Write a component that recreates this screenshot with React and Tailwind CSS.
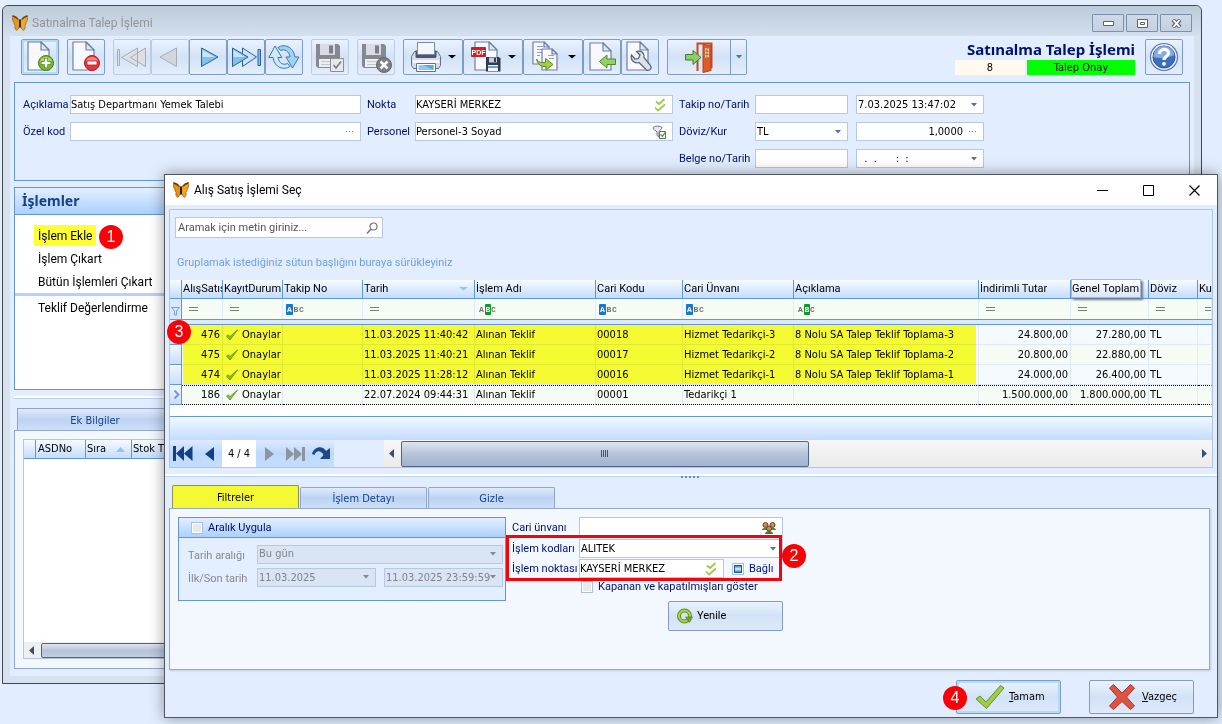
import { useState } from "react";

const pageFill = "#f7f9ff";

function Butterfly({ faded }) {
  return (
    <svg width="16" height="16" viewBox="0 0 16 16" opacity={faded ? 0.9 : 1}>
      <path d="M7.500 5.500C6 2.500 3 .8.4.6c-.2 2.400 0 5.400 1.400 6.600 0 1.500.6 2.600 1.400 3.100-.8 1.700-.2 4 1.300 5.100C6 14.800 7.200 12.500 7.600 10z" fill="#e8920f" stroke="#8a4a08" strokeWidth=".7" />
      <path d="M8.500 5.500C10 2.500 13 .8 15.600.6c.2 2.400 0 5.400-1.400 6.600 0 1.500-.6 2.600-1.400 3.100.8 1.700.2 4-1.300 5.100-1.500-.6-2.700-2.900-3.100-5.400z" fill="#f2a422" stroke="#8a4a08" strokeWidth=".7" />
      <path d="M.8 1.200C3.500 1.800 5 3 6 4.500M15.200 1.200C12.500 1.800 11 3 10 4.500" fill="none" stroke="#5b3008" strokeWidth="1.200" />
      <path d="M8 4.500v8" stroke="#2b1a0c" strokeWidth="2" />
    </svg>
  );
}

function Page({ x = 3, y = 1, w = 22, h = 28 }) {
  const f = w > 18 ? 8 : 5;
  return (
    <g stroke="#6d7fa8" strokeWidth="1.200" strokeLinejoin="round">
      <path d={`M${x} ${y}h${w - f}l${f} ${f}v${h - f}h${-w}z`} fill={pageFill} />
      <path d={`M${x + w - f} ${y}v${f}h${f}z`} fill="#dfe6f6" />
    </g>
  );
}

function Icon({ children, size = 32 }) {
  return (
    <svg width={size} height={size} viewBox={`0 0 ${size} ${size}`} className="shrink-0" fill="none">
      {children}
    </svg>
  );
}

function NewIcon() {
  return (
    <Icon>
      <Page x={4} y={1} w={21} />
      <circle cx="22" cy="22" r="7.500" fill="#76b82a" stroke="#4c7c17" />
      <path d="M16 20a6.500 6.500 0 0 1 12 0c-4 2-8 2-12 0z" fill="#a9d95f" />
      <path d="M22 17v10M17 22h10" stroke="#4c7c17" strokeWidth="4" />
      <path d="M22 17.500v9M17.500 22h9" stroke="#fff" strokeWidth="2.600" />
    </Icon>
  );
}

function DeleteIcon() {
  return (
    <Icon>
      <Page x={3} y={1} w={21} />
      <circle cx="22" cy="22" r="7.500" fill="#ee3236" stroke="#b31a1f" />
      <path d="M16 20a6.500 6.500 0 0 1 12 0z" fill="#f98282" />
      <path d="M17 20h10v4H17z" fill="#fff" stroke="#b31a1f" strokeWidth=".8" />
    </Icon>
  );
}

function FirstIcon() {
  return (
    <Icon>
      <g fill="#dcdfe4" stroke="#a7adb7">
        <path d="M1.500 8.500h2v16h-2zM5.500 16.500l16-9.500v18.500zM14.500 16.500L29.500 7v18.500z" />
      </g>
    </Icon>
  );
}

function PrevIcon() {
  return (
    <Icon>
      <path d="M6 16L22.500 7v18.500z" fill="#d3d7dd" stroke="#a7adb7" />
    </Icon>
  );
}

function NextIcon() {
  return (
    <Icon>
      <path d="M9.500 7L26 16 9.500 25.500z" fill="#7fc0ec" stroke="#2d5f9e" />
      <path d="M10.500 9L23 16H10.500z" fill="#c8e5f8" />
    </Icon>
  );
}

function LastIcon() {
  return (
    <Icon>
      <g stroke="#2d5f9e">
        <path d="M12.500 7L26.500 16l-14 9.500z" fill="#c8e5f8" />
        <path d="M2.500 7L18 16 2.500 25.500z" fill="#7fc0ec" />
        <path d="M28 8.500h2.500v16H28z" fill="#7fc0ec" />
      </g>
      <path d="M3.500 9L15 16H3.500z" fill="#c8e5f8" />
    </Icon>
  );
}

function RefreshIcon() {
  return (
    <Icon>
      <g stroke="#3c78b0" strokeLinejoin="round">
        <path d="M10 6.500c6-4 15-1.500 17 9.500h4l-6.500 11L18 16h4c-1-6-5.500-8.500-9.500-6.500z" fill="#9fd3ee" />
        <path d="M22 25.500c-6 4-15.500 1.500-17-9H.8L7 5l6.800 11.500H10c1 6 5.500 8 9.500 6z" fill="#cdeaf6" />
      </g>
    </Icon>
  );
}

function Floppy() {
  return (
    <g>
      <path d="M2 3h22l2 2v22H4l-2-2z" fill="#85898f" />
      <path d="M6 3h15v11H6z" fill="#d9dde3" />
      <path d="M15 4.500h4v8h-4z" fill="#7b7f85" />
      <path d="M5 18h17v8H5z" fill="#eceef2" />
      <path d="M7 20.500h13M7 23.500h13" stroke="#c3c7ce" />
    </g>
  );
}

function SaveIcon() {
  return (
    <Icon>
      <Floppy />
      <path d="M16.500 17.500h13v13h-13z" fill="#e6e8ec" stroke="#8b9097" />
      <path d="M19.500 24l2.500 3 5-6.500" stroke="#7a7f86" strokeWidth="1.600" />
    </Icon>
  );
}

function SaveCloseIcon() {
  return (
    <Icon>
      <Floppy />
      <circle cx="24" cy="24" r="7.500" fill="#7b7f85" stroke="#64686e" />
      <path d="M20.500 20.500l7 7m0-7l-7 7" stroke="#fff" strokeWidth="2.600" />
    </Icon>
  );
}

function PrinterIcon() {
  return (
    <Icon>
      <path d="M4.500 10.500h23l3 5v9l-2 3h-25l-2-3v-9z" fill="#d5dbe8" stroke="#5f7093" />
      <path d="M5.500 9.500h21v6c0 1-1 1.500-2 1.500h-17c-1 0-2-.5-2-1.500z" fill="#4d566c" />
      <path d="M7.500 1.500h17v12h-17z" fill="#f4f6fc" stroke="#7a89ab" />
      <path d="M3 19h26v3H3z" fill="#f4f6fb" />
      <path d="M6.500 22.500h19v8h-19z" fill="#fff" stroke="#5f7093" />
      <path d="M8.500 24h15v5h-15z" fill="#8ccaf2" />
      <path d="M13 24h10.500v5z" fill="#5aa9e4" />
    </Icon>
  );
}

function PdfIcon() {
  return (
    <Icon>
      <Page x={5} y={1} w={22} h={28} />
      <rect x="1" y="6" width="15" height="10" rx="1" fill="#cf1f24" />
      <text x="8.500" y="13.500" textAnchor="middle" fontSize="7" fontWeight="bold" fill="#fff" fontFamily="Liberation Sans, sans-serif">PDF</text>
      <path d="M16 16h13l1.500 1.500v13H16z" fill="#33394f" />
      <path d="M19 16.500h8v5h-8z" fill="#c8cede" />
      <path d="M24 17h2v4h-2z" fill="#33394f" />
      <path d="M18 24h10v6H18z" fill="#f3f5fb" />
      <path d="M18 25h10v2H18z" fill="#5aa5dc" />
    </Icon>
  );
}

function CopyIcon() {
  return (
    <Icon>
      <Page x={3} y={1} w={16} h={22} />
      <path d="M7 5.500h6M7 8.500h6M7 11.500h8M7 14.500h3" stroke="#90a0c4" />
      <Page x={12} y={8} w={15} h={21} />
      <path d="M18 14.500h6M19 17.500h5" stroke="#90a0c4" />
      <path d="M6.500 18c2 3.500 5 4 9 3.500V17.500l7.500 6-7 5.500v-3.500C10.500 26 7.500 23 6.500 18z" fill="#a5cf3c" stroke="#5f8a1c" />
    </Icon>
  );
}

function ImportIcon() {
  return (
    <Icon>
      <Page x={4} y={2} w={21} h={27} />
      <path d="M13.500 20.500l7.500-6.500v4h8.500v5.500H21V27z" fill="#97cf62" stroke="#4f8a2a" />
    </Icon>
  );
}

function WrenchIcon() {
  return (
    <Icon>
      <Page x={3} y={1} w={21} h={28} />
      <path d="M7.500 14l3.500 4 3.500-.5L16 14l-3.500-3.500c4-1.500 8 1 7.500 6l6.500 8c2 3-1.500 6-4 4.500L15 21.500C10 23 6 18.500 7.500 14z" fill="#dbe2ec" stroke="#566277" strokeWidth="1.200" />
    </Icon>
  );
}

function DoorIcon() {
  return (
    <Icon>
      <path d="M14.500 30V2.500h14V27" stroke="#d0451c" strokeWidth="2" />
      <path d="M20 3.500l8 1v25l-8 2z" fill="#d95b2e" stroke="#b5431a" />
      <path d="M22 7l4 .5v8.500l-4 .5z" fill="#f6e3c0" />
      <path d="M24 7v9M22 10l4 .3M22 13.300l4-.1" stroke="#a8421c" strokeWidth=".8" />
      <path d="M2.500 13.500H10v-4l8 7-8 7v-4.500H2.500z" fill="#8ccf6a" stroke="#3f7d2c" />
    </Icon>
  );
}

function HelpIcon() {
  return (
    <Icon>
      <circle cx="16" cy="16" r="13.500" fill="#e9effb" stroke="#5a76ab" strokeWidth="1.200" />
      <circle cx="16" cy="16" r="11" fill="#3f6fbc" stroke="#274f93" />
      <path d="M5.500 14a10.600 10.600 0 0 1 21 0c-6 3-15 4-21 2z" fill="#86aae2" />
      <path d="M11.500 13c0-6 9-6 9-1 0 3.500-4.500 3.500-4.500 7" stroke="#fff" strokeWidth="3.200" />
      <circle cx="16" cy="22.800" r="1.900" fill="#fff" />
    </Icon>
  );
}

function Caret({ color = "#4a74ad", size = 6 }) {
  return (
    <svg width={size} height="4" viewBox="0 0 6 4" preserveAspectRatio="none" className="shrink-0 pointer-events-none">
      <path d="M0 0h6L3 3.500z" fill={color} />
    </svg>
  );
}

function DoubleCheck() {
  return (
    <Icon size={14}>
      <path d="M4 3.500l3 2.500 5.500-5M3 9.500l3 3 7-6" stroke="#9cc94b" strokeWidth="1.700" />
    </Icon>
  );
}

function PersonFilter() {
  return (
    <Icon size={14}>
      <path d="M1 3c0-2.500 9-2.500 9 0 0 1-3 2.500-3 4v5L5 10.500V7C4 5.500 1 4.500 1 3z" fill="#e8ebf0" stroke="#6b7484" />
      <path d="M7.500 6.500h6v7h-6z" fill="#fff" stroke="#5a6b86" />
      <path d="M8.500 9.500l2 2 2.500-4" stroke="#4f9a1c" strokeWidth="1.400" />
    </Icon>
  );
}

function PeopleIcon() {
  return (
    <Icon size={14}>
      <path d="M0 9c0-3 7-3 7 0zM7 9c0-3 7-3 7 0z" fill="#4c8a3a" />
      <path d="M3 13c0-4 8-4 8 0z" fill="#3d7a2c" />
      <g fill="#c98d5a" stroke="#5f3512" strokeWidth=".9">
        <circle cx="3.500" cy="4" r="2.500" />
        <circle cx="10.500" cy="4" r="2.500" />
        <circle cx="7" cy="7.500" r="2.500" />
      </g>
    </Icon>
  );
}

function SmallTick() {
  return (
    <Icon size={14}>
      <path d="M1.500 8L5 12 12.500 2 5 8.500 3 6.800z" fill="#8fc04c" stroke="#6a9a30" strokeWidth=".9" strokeLinejoin="round" />
    </Icon>
  );
}

function Dots() {
  return (
    <svg width="8" height="2" viewBox="0 0 8 2" className="shrink-0">
      <path d="M0 0h1v1H0zM3 0h1v1H3zM6 0h1v1H6z" fill="#5a7fb5" />
    </svg>
  );
}

function ToolButton({ children, disabled, active, wide, label }) {
  return (
    <button
      aria-label={label}
      disabled={disabled}
      className={`flex h-9 items-center rounded-xs border bg-linear-to-b from-[#eaf3ff] via-[#d2e2f6] to-[#e4eefc] ${
        wide ? "w-[60px] justify-between px-1.5" : "w-[38px] justify-center"
      } ${disabled ? "border-[#bccbe0]" : "border-[#7f9bc6]"} ${active ? "ring-2 ring-inset ring-[#b4dbf8]" : ""}`}
    >
      {children}
      {wide && <Caret color="#000" size={8} />}
    </button>
  );
}

function Field({ id, label, value, type = "text", align, disabled, icon, className = "" }) {
  return (
    <div
      className={`flex h-[19px] min-w-0 items-center border pr-1.5 font-['DejaVu_Sans_Condensed','DejaVu_Sans',sans-serif] ${
        disabled ? "border-[#b5c8e4] bg-[#d9e4f4] text-[#808488]" : "border-[#b5c8e4] bg-white text-black"
      } ${className}`}
    >
      {type === "select" ? (
        <select id={id} aria-label={label} disabled={disabled} defaultValue={value} className="h-full min-w-0 flex-1 appearance-none bg-transparent pl-px outline-none">
          <option>{value}</option>
        </select>
      ) : (
        <input
          id={id}
          aria-label={label}
          disabled={disabled}
          defaultValue={value}
          className={`h-full min-w-0 flex-1 whitespace-pre bg-transparent outline-none ${align === "right" ? "pr-1.5 text-right" : ""}`}
        />
      )}
      {icon}
    </div>
  );
}

function Badge({ n, className }) {
  return (
    <span className={`absolute z-10 flex size-6 items-center justify-center rounded-full bg-[#fb0007] font-['Liberation_Sans',sans-serif] text-base leading-none text-white ${className}`}>
      {n}
    </span>
  );
}

function Splitter({ grip }) {
  return (
    <div className="relative h-[3px] border-t-2 border-b border-t-white border-b-[#b8d4f8]">
      {grip && (
        <svg width="20" height="3" viewBox="0 0 20 3" className="absolute top-0 left-1/2 -translate-x-1/2">
          <path d="M0 0h2v2H0zM4 0h2v2H4zM8 0h2v2H8zM12 0h2v2h-2zM16 0h2v2h-2z" fill="#5f8ecb" />
        </svg>
      )}
    </div>
  );
}

function ArrowHead({ right }) {
  return (
    <svg width="5" height="9" viewBox="0 0 5 9">
      <path d={right ? "M0 0v9l5-4.500z" : "M5 0v9L0 4.500z"} fill="#3b4e78" />
    </svg>
  );
}

function Equals() {
  return (
    <svg width="9" height="5" viewBox="0 0 9 5" className="ml-[7px]">
      <path d="M0 0h9v1H0zM0 3h9v1H0z" fill="#7b7f7b" />
    </svg>
  );
}

function AbcFilter({ mode }) {
  const on = mode === "begins" ? "bg-[#1277d6] text-white" : "";
  const mid = mode === "contains" ? "bg-[#0c9b28] text-white" : "";
  return (
    <span className="ml-[3px] flex items-center font-['Liberation_Mono',monospace] text-[8px] leading-[11px] font-bold text-[#707070]">
      <span className={`w-[7px] shrink-0 rounded-[1px] text-center leading-[11px] ${on}`}>A</span>
      <span className={`w-[6px] shrink-0 rounded-[1px] text-center leading-[11px] ${mid}`}>B</span>
      <span>C</span>
    </span>
  );
}

const columns = [
  { title: "AlışSatış", width: "w-[41px]", filter: "eq" },
  { title: "KayıtDurum", width: "w-[60px]", filter: "eq" },
  { title: "Takip No", width: "w-[80px]", filter: "begins" },
  { title: "Tarih", width: "w-[112px]", filter: "eq", sort: true },
  { title: "İşlem Adı", width: "w-[121px]", filter: "contains" },
  { title: "Cari Kodu", width: "w-[87px]", filter: "begins" },
  { title: "Cari Ünvanı", width: "w-[111px]", filter: "begins" },
  { title: "Açıklama", width: "w-[185px]", filter: "contains" },
  { title: "İndirimli Tutar", width: "w-[92px]", filter: "eq" },
  { title: "Genel Toplam", width: "w-[78px]", filter: "eq", raised: true },
  { title: "Döviz", width: "w-[49px]", filter: "eq" },
  { title: "Ku", width: "", filter: "eq" },
];

const rows = [
  ["476", "Onaylar", "", "11.03.2025 11:40:42", "Alınan Teklif", "00018", "Hizmet Tedarikçi-3", "8 Nolu SA Talep Teklif Toplama-3", "24.800,00", "27.280,00", "TL", ""],
  ["475", "Onaylar", "", "11.03.2025 11:40:21", "Alınan Teklif", "00017", "Hizmet Tedarikçi-2", "8 Nolu SA Talep Teklif Toplama-2", "20.800,00", "22.880,00", "TL", ""],
  ["474", "Onaylar", "", "11.03.2025 11:28:12", "Alınan Teklif", "00016", "Hizmet Tedarikçi-1", "8 Nolu SA Talep Teklif Toplama-1", "24.000,00", "26.400,00", "TL", ""],
  ["186", "Onaylar", "", "22.07.2024 09:44:31", "Alınan Teklif", "00001", "Tedarikçi 1", "", "1.500.000,00", "1.800.000,00", "TL", ""],
];

const headFill = "bg-linear-to-b from-[#f7fbff] to-[#c3dcff]";

function OrdersTable() {
  const [selected, setSelected] = useState("186");

  return (
    <div className="relative bg-white pb-[11px]">
      <table className="w-full table-fixed border-separate border-spacing-0 whitespace-nowrap">
        <colgroup>
          <col className="w-[12px]" />
          {columns.map((c) => (
            <col key={c.title} className={c.width} />
          ))}
        </colgroup>
        <thead>
          <tr className="h-[19px] font-['Roboto',sans-serif]">
            <th className={`border-r border-b border-[#6496d2] p-0 ${headFill}`}></th>
            {columns.map((c) => (
              <th key={c.title} className={`relative border-r border-b border-[#6496d2] p-0 text-left font-normal last:border-r-0 ${headFill}`}>
                {c.raised ? (
                  <span className="absolute -top-px left-0 flex h-[19px] w-[70px] items-center border border-[#a9b8cf] bg-linear-to-b from-white to-[#d7e6fb] shadow-[2px_2px_2px_#6b7a90]">
                    {c.title}
                  </span>
                ) : (
                  <div className="flex items-center justify-between overflow-hidden pl-px">
                    <span className="overflow-hidden">{c.title}</span>
                    {c.sort && (
                      <span className="pr-1.5">
                        <Caret color="#93c3fb" size={9} />
                      </span>
                    )}
                  </div>
                )}
              </th>
            ))}
          </tr>
          <tr className="h-5">
            <td className="border-r border-[#6496d2] bg-[#d9e8fc] p-0">
              <svg width="9" height="10" viewBox="0 0 9 10" className="ml-px mt-1" fill="none">
                <path d="M.5 1.500h8L5.500 5v4h-2V5z" stroke="#6ba3e8" />
              </svg>
            </td>
            {columns.map((c) => (
              <td key={c.title} className="overflow-hidden border-r border-[#dfe9fb] bg-[#f4fcf4] p-0">
                {c.filter === "eq" ? <Equals /> : <AbcFilter mode={c.filter} />}
              </td>
            ))}
          </tr>
          <tr className="h-[6px]">
            <td colSpan={13} className="border-y border-[#6496d2] bg-[#dbe9fc] p-0"></td>
          </tr>
        </thead>
        <tbody>
          {rows.map((row, r) => {
            const isSelected = row[0] === selected;
            return (
              <tr key={row[0]} className={`h-5 ${r % 2 ? "bg-[#f4fcf4]" : "bg-[#f5faff]"}`} onClick={() => setSelected(row[0])}>
                <td className="border-r border-b border-[#6496d2] bg-linear-to-b from-[#f2f7ff] to-[#c9defb] p-0">
                  {isSelected && (
                    <svg width="7" height="9" viewBox="0 0 7 9" className="ml-[3px]" fill="none">
                      <path d="M1.500 .5l4 4-4 4" stroke="#6496dc" strokeWidth="1.800" />
                    </svg>
                  )}
                </td>
                {row.map((cell, i) => (
                  <td
                    key={i}
                    className={`border-r border-r-[#dfe9fb] p-0 ${i === 0 || i === 8 || i === 9 ? "pr-0.5 text-right" : "pl-px"} ${
                      isSelected ? "border-y border-y-black [border-block-style:dotted]" : "border-b border-b-[#dfe9fb]"
                    }`}
                  >
                    {i === 1 ? (
                      <span className="flex items-center gap-[3px] pl-px">
                        <SmallTick />
                        {cell}
                      </span>
                    ) : (
                      cell
                    )}
                  </td>
                ))}
              </tr>
            );
          })}
        </tbody>
      </table>
      {/* marker stroke over the offers being compared */}
      <div className="pointer-events-none absolute top-[45px] left-[13px] h-[59px] w-[793px] bg-[#ffff33] mix-blend-multiply"></div>
      <Badge n={3} className="top-10 -left-[3px]" />
    </div>
  );
}

function Navigator() {
  return (
    <div className="flex h-[27px] items-center">
      <div className="flex h-full items-center bg-linear-to-b from-[#deebfe] via-[#bcd8fd] to-[#c6defe]">
        <button aria-label="İlk" className="flex w-[26px] justify-center">
          <svg width="20" height="15" viewBox="0 0 20 15" fill="#123f86"><path d="M0 0h3v15H0zM11 0v15L3 7.500zM19.500 0v15L11 7.500z" /></svg>
        </button>
        <button aria-label="Önceki" className="flex w-[26px] justify-center">
          <svg width="9" height="14" viewBox="0 0 9 14" fill="#123f86"><path d="M9 0v14L0 7z" /></svg>
        </button>
        <span className="flex h-full w-[34px] items-center justify-center bg-white">4 / 4</span>
        <button aria-label="Sonraki" className="flex w-[26px] justify-center">
          <svg width="9" height="14" viewBox="0 0 9 14" fill="#8f959e"><path d="M0 0v14l9-7z" /></svg>
        </button>
        <button aria-label="Son" className="flex w-[26px] justify-center">
          <svg width="19" height="14" viewBox="0 0 19 14" fill="#8f959e"><path d="M0 0v14l8-7zM8 0v14l8-7zM16 0h3v14h-3z" /></svg>
        </button>
        <button aria-label="Git" className="flex w-[26px] justify-center">
          <svg width="18" height="13" viewBox="0 0 18 13"><path d="M0 7C2-1 11-2 14 4l4-3v11H8l3.500-4C9 3 4 3 2.500 8z" fill="#1d4a86" /></svg>
        </button>
      </div>
      <div className="ml-[50px] flex h-full flex-1 items-center bg-linear-to-b from-[#f7f7f7] to-[#ebebeb] pl-[5px]">
        <ArrowHead />
        <div className="ml-[7px] flex h-[26px] w-[408px] items-center justify-center gap-px rounded-xs border border-[#4f648c] bg-linear-to-b from-[#dfe5ef] via-[#b6c3d8] to-[#a3b3cd]">
          <svg width="8" height="7" viewBox="0 0 8 7"><path d="M0 0h1v7H0zM2 0h1v7H2zM4 0h1v7H4zM6 0h1v7H6z" fill="#435375" /></svg>
        </div>
        <div className="ml-auto pr-[5px]"><ArrowHead right /></div>
      </div>
    </div>
  );
}

function Check({ label, id, mixed, className = "" }) {
  return (
    <label htmlFor={id} className={`flex items-center gap-[5px] text-[#001070] ${className}`}>
      <span className="relative flex size-3">
        <input id={id} type="checkbox" className="size-3 appearance-none border border-[#a9c0e2] bg-[#e6e9ee] shadow-[inset_0_0_0_1px_#fff]" />
        {mixed && <span className="pointer-events-none absolute inset-[2px] border border-[#1c5a90] bg-linear-to-b from-[#2f86bd] via-[#e5f4fd] to-[#2f86bd]"></span>}
      </span>
      {label}
    </label>
  );
}

const tabFill = "bg-linear-to-b from-[#e0ebfa] via-[#bcd3f3] to-[#cfe0f8]";

function Tab({ children, active }) {
  if (active) {
    return (
      <button role="tab" aria-selected="true" className="h-[23px] w-[127px] rounded-t-xs border border-b-0 border-[#90904a] bg-[#f5f934] pt-0.5 text-black">
        {children}
      </button>
    );
  }
  return (
    <button role="tab" aria-selected="false" className={`h-[21px] w-[127px] rounded-t-xs border border-b-0 border-[#90a5cc] pt-0.5 text-[#15428b] ${tabFill}`}>
      {children}
    </button>
  );
}

function FilterPanel() {
  return (
    <div className="flex flex-1 items-start border border-[#92a8cf] bg-[#f3f8ff] pt-2 pl-2 font-['Roboto',sans-serif] shadow-[1px_1px_2px_#b9cbe8]">
      <fieldset className="h-[84px] w-[328px] border border-[#6496d2] bg-[#e3eeff]">
        <div className="flex h-5 items-center border-b border-[#6496d2] bg-linear-to-b from-[#e3efff] to-[#abd0ff] pl-3">
          <Check id="aralik" label="Aralık Uygula" />
        </div>
        <div className="flex flex-col gap-[3px] pt-1.5 pl-[9px] text-[#85898f]">
          <div className="flex items-center">
            <label htmlFor="tarihAraligi" className="w-[69px] pt-1">Tarih aralığı</label>
            <Field id="tarihAraligi" type="select" value="Bu gün" disabled icon={<Caret color="#85898f" />} className="w-[246px]" />
          </div>
          <div className="flex items-center">
            <label htmlFor="ilkTarih" className="w-[69px] pt-1">İlk/Son tarih</label>
            <Field id="ilkTarih" value="11.03.2025" disabled icon={<Caret color="#85898f" />} className="mr-2 w-[119px] pl-px" />
            <Field id="sonTarih" label="Son tarih" value="11.03.2025 23:59:59" disabled icon={<Caret color="#85898f" />} className="w-[119px] pl-px" />
          </div>
        </div>
      </fieldset>
      <div className="relative ml-[6px] w-[271px]">
        <div className="grid grid-cols-[67px_1fr] items-center gap-y-px whitespace-nowrap text-[#001070]">
          <label htmlFor="cari">Cari ünvanı</label>
          <Field id="cari" value="" icon={<PeopleIcon />} className="h-[21px] pr-0.5" />
          <label htmlFor="kodlar">İşlem kodları</label>
          <Field id="kodlar" type="select" value="ALITEK" icon={<Caret />} />
          <label htmlFor="nokta2">İşlem noktası</label>
          <div className="flex items-center gap-2">
            <Field id="nokta2" value="KAYSERİ MERKEZ" icon={<DoubleCheck />} className="w-[145px] pr-0.5" />
            <Check id="bagli" label="Bağlı" mixed />
          </div>
        </div>
        <Check id="kapanan" label="Kapanan ve kapatılmışları göster" className="ml-[69px] h-[17px]" />
        <button className="mt-1.5 ml-auto flex h-[30px] w-[115px] items-center gap-1 rounded-xs border border-[#7f9bc6] bg-linear-to-b from-[#eaf3ff] via-[#d2e2f6] to-[#dfeafa] pl-2">
          <Icon size={16}>
            <circle cx="7.500" cy="8" r="5.500" stroke="#5f8f1e" strokeWidth="4" />
            <circle cx="7.500" cy="8" r="5.500" stroke="#a6d45a" strokeWidth="2" />
            <path d="M8.500 9h7l-3 5.500z" fill="#6ea523" stroke="#4f7d15" strokeWidth=".6" />
          </Icon>
          Yenile
        </button>
        <div className="pointer-events-none absolute top-[18px] -left-[6px] h-[46px] w-[276px] border-3 border-[#f9000b]"></div>
        <Badge n={2} className="top-[27px] -right-[23px]" />
      </div>
    </div>
  );
}

function SelectDialog() {
  return (
    <section className="absolute top-[174px] right-1 bottom-1.5 left-[164px] flex flex-col border border-[#4f565f] bg-[#e2eeff] shadow-[0_0_14px_rgba(0,0,0,0.4)]">
      <header className="flex h-[30px] shrink-0 items-center bg-white pr-[17px] pl-2 font-['Roboto',sans-serif] text-xs">
        <Butterfly />
        <h2 className="ml-[5px] flex-1 text-black">Alış Satış İşlemi Seç</h2>
        <div className="flex gap-[35px]">
          <button aria-label="Küçült"><svg width="11" height="11" viewBox="0 0 11 11"><path d="M0 5h11v1H0z" /></svg></button>
          <button aria-label="Büyüt"><svg width="11" height="11" viewBox="0 0 11 11" fill="none"><path d="M.5.5h10v10H.5z" stroke="#000" /></svg></button>
          <button aria-label="Kapat"><svg width="11" height="11" viewBox="0 0 11 11" fill="none"><path d="M.5.5l10 10m0-10l-10 10" stroke="#000" strokeWidth="1.200" /></svg></button>
        </div>
      </header>

      <div className="mt-1 mr-1 ml-1 border border-[#b0c6e4]">
        <div className="px-[5px] pt-[7px]">
          <div className="flex h-[21px] w-[208px] items-center border border-[#b5c8e4] bg-white pr-1 font-['Roboto',sans-serif]">
            <input type="search" aria-label="Ara" placeholder="Aramak için metin giriniz..." className="min-w-0 flex-1 bg-transparent pl-0.5 outline-none placeholder:text-[#555555]" />
            <Icon size={12}>
              <circle cx="7.500" cy="4.500" r="3.500" stroke="#777" strokeWidth="1.200" />
              <path d="M5 7L1 11.500" stroke="#777" strokeWidth="1.500" />
            </Icon>
          </div>
        </div>
        <p className="flex h-[42px] items-center pt-2 pl-[7px] font-['Roboto',sans-serif] text-[#6f9fe0]">Gruplamak istediğiniz sütun başlığını buraya sürükleyiniz</p>
        <OrdersTable />
        <div className="h-6 border-t border-[#6496d2] bg-linear-to-b from-[#f2f8ff] to-[#c3dcff]"></div>
        <Navigator />
      </div>

      <div className="pt-1.5 pb-2">
        <Splitter grip />
      </div>

      <div className="mr-[7px] ml-1 flex flex-1 flex-col">
        <div role="tablist" className="flex items-end gap-px pl-[3px]">
          <Tab active>Filtreler</Tab>
          <Tab>İşlem Detayı</Tab>
          <Tab>Gizle</Tab>
        </div>
        <FilterPanel />
      </div>

      <footer className="flex justify-end gap-7 pt-2.5 pr-[23px] pb-[3px]">
        <div className="relative">
          <button className="flex h-[34px] w-[105px] items-center gap-1 rounded-xs border border-[#7f9bc6] bg-linear-to-b from-[#eaf3ff] via-[#d2e2f6] to-[#dfeafa] pl-[18px] ring-2 ring-[#b4dbf8] ring-inset">
            <Icon size={30}>
              <path d="M1 17l4-3 6 6L25.500 3.500 29 6 11.500 26.500z" fill="#a2cb47" stroke="#66912a" strokeLinejoin="round" />
            </Icon>
            <span><u>T</u>amam</span>
          </button>
          <Badge n={4} className="top-1.5 -left-[13px]" />
        </div>
        <button className="flex h-[34px] w-[105px] items-center gap-1.5 rounded-xs border border-[#7f9bc6] bg-linear-to-b from-[#eaf3ff] via-[#d2e2f6] to-[#dfeafa] pl-[18px]">
          <Icon size={28}>
            <path d="M1.500 5L5.500 1.500 14 10 22.500 1.500 26.500 5 18.500 14 26.500 23 22.500 26.500 14 18.500 5.500 26.500 1.500 23 9.500 14z" fill="#dd5443" stroke="#a5352a" strokeLinejoin="round" />
          </Icon>
          <span><u>V</u>azgeç</span>
        </button>
      </footer>
    </section>
  );
}

function Toolbar() {
  return (
    <div className="flex gap-2">
      <ToolButton label="Yeni" active><NewIcon /></ToolButton>
      <ToolButton label="Sil"><DeleteIcon /></ToolButton>
      <div className="flex">
        <ToolButton label="İlk kayıt" disabled><FirstIcon /></ToolButton>
        <ToolButton label="Önceki kayıt" disabled><PrevIcon /></ToolButton>
        <ToolButton label="Sonraki kayıt"><NextIcon /></ToolButton>
        <ToolButton label="Son kayıt"><LastIcon /></ToolButton>
        <ToolButton label="Tazele"><RefreshIcon /></ToolButton>
      </div>
      <ToolButton label="Kaydet" disabled><SaveIcon /></ToolButton>
      <ToolButton label="Kaydet ve kapat" disabled><SaveCloseIcon /></ToolButton>
      <div className="flex">
        <ToolButton label="Yazdır" wide><PrinterIcon /></ToolButton>
        <ToolButton label="PDF" wide><PdfIcon /></ToolButton>
        <ToolButton label="Kopyala" wide><CopyIcon /></ToolButton>
        <ToolButton label="Al"><ImportIcon /></ToolButton>
        <ToolButton label="Ayarlar"><WrenchIcon /></ToolButton>
      </div>
      <div className="flex h-9 rounded-xs border border-[#7f9bc6] bg-linear-to-b from-[#eaf3ff] via-[#d2e2f6] to-[#e4eefc]">
        <button aria-label="Çıkış" className="flex w-[62px] items-center justify-center"><DoorIcon /></button>
        <button aria-label="Çıkış seçenekleri" className="flex w-4 items-center justify-center border-l border-[#7f9bc6]"><Caret /></button>
      </div>
    </div>
  );
}

function RequestForm() {
  return (
    <div className="flex h-[99px] items-start gap-1.5 border border-[#6496d2] pt-3 pl-2 font-['Roboto',sans-serif] text-[#001070]">
      <div className="grid grid-cols-[47px_291px] items-center gap-y-2">
        <label htmlFor="aciklama">Açıklama</label>
        <Field id="aciklama" value="Satış Departmanı Yemek Talebi" />
        <label htmlFor="ozelKod">Özel kod</label>
        <Field id="ozelKod" value="" icon={<Dots />} className="pr-1" />
      </div>
      <div className="grid grid-cols-[48px_258px] items-center gap-y-2">
        <label htmlFor="nokta">Nokta</label>
        <Field id="nokta" value="KAYSERİ MERKEZ" icon={<DoubleCheck />} className="pr-0.5" />
        <label htmlFor="personel">Personel</label>
        <Field id="personel" value="Personel-3 Soyad" icon={<PersonFilter />} className="pr-0.5" />
      </div>
      <div className="flex gap-2">
        <div className="grid grid-cols-[76px_93px] items-center gap-y-2">
          <label htmlFor="takip">Takip no/Tarih</label>
          <Field id="takip" value="" />
          <label htmlFor="doviz">Döviz/Kur</label>
          <Field id="doviz" type="select" value="TL" icon={<Caret />} />
          <label htmlFor="belge">Belge no/Tarih</label>
          <Field id="belge" value="" />
        </div>
        <div className="flex w-[128px] flex-col gap-2">
          <Field label="Tarih" value="7.03.2025 13:47:02" icon={<Caret />} className="pl-px" />
          <Field label="Kur" value="1,0000" align="right" icon={<Dots />} className="pr-1" />
          <Field label="Belge tarihi" value="  .  .      :  :" icon={<Caret />} className="pl-px" />
        </div>
      </div>
    </div>
  );
}

function Sidebar() {
  return (
    <div className="relative mt-[6px] flex min-h-0 flex-1 flex-col">
      <nav className="h-[203px] border border-[#6496d2] bg-white text-black">
        <h3 className="flex h-[27px] items-center border-b border-[#6496d2] bg-linear-to-b from-[#e3efff] to-[#abd0ff] pl-[7px] font-['Noto_Sans',sans-serif] text-sm font-bold text-[#15428b]">
          İşlemler
        </h3>
        <ul className="pt-[9px] font-['Roboto',sans-serif] text-xs">
          <li className="relative flex h-[23px] items-center pl-[19px]">
            <a href="#ekle" className="flex h-[21px] items-center bg-[#ffff33] px-1">İşlem Ekle</a>
            <Badge n={1} className="top-px left-[84px]" />
          </li>
          <li className="flex h-[23px] items-center pl-[23px]"><a href="#cikart">İşlem Çıkart</a></li>
          <li className="flex h-[23px] items-center pl-[23px]"><a href="#butun">Bütün İşlemleri Çıkart</a></li>
          <li className="h-[3px] bg-[#b3d2ff]"></li>
          <li className="flex h-6 items-center pl-[23px]"><a href="#teklif">Teklif Değerlendirme</a></li>
        </ul>
      </nav>
      <div className="pt-1.5 pb-[9px]">
        <Splitter />
      </div>
      <button role="tab" className={`ml-[3px] h-[22px] w-[156px] shrink-0 border border-b-0 border-[#90a5cc] pt-0.5 text-[#15428b] ${tabFill}`}>
        Ek Bilgiler
      </button>
      <div className="flex flex-1 flex-col border border-[#92a8cf] bg-[#f3f8ff] px-2 pt-2 pb-[9px]">
        <div className="flex flex-1 flex-col border border-[#b0c6e4] bg-white">
          <table className="w-full table-fixed border-separate border-spacing-0">
            <thead>
              <tr className="h-[19px] text-left text-black">
                <th className={`w-3 border-r border-b border-[#6496d2] p-0 ${headFill}`}></th>
                <th className={`w-[50px] border-r border-b border-[#6496d2] p-0 pl-0.5 font-normal ${headFill}`}>ASDNo</th>
                <th className={`w-[46px] border-r border-b border-[#6496d2] p-0 font-normal ${headFill}`}>
                  <div className="flex items-center justify-between pr-1.5 pl-px">
                    Sıra
                    <svg width="9" height="5" viewBox="0 0 9 5"><path d="M0 5h9L4.500 0z" fill="#93c3fb" /></svg>
                  </div>
                </th>
                <th className={`border-b border-[#6496d2] p-0 pl-px font-normal ${headFill}`}>Stok Tipi</th>
              </tr>
            </thead>
          </table>
          <div className="mt-auto flex h-4 items-center bg-[#efefef] pl-[5px]">
            <ArrowHead />
            <div className="ml-[7px] h-[15px] flex-1 rounded-xs border border-[#4f648c] bg-linear-to-b from-[#dfe5ef] via-[#b6c3d8] to-[#c3cede]"></div>
          </div>
        </div>
      </div>
    </div>
  );
}

const frameButton = "flex h-[18px] w-8 items-center justify-center rounded-[1px] border border-[#7d8fb0] bg-linear-to-b from-[#cfdae7] to-[#c3d1e0]";

function App() {
  return (
    <main className="relative h-screen min-h-[724px] overflow-hidden bg-[#e2eeff] font-['DejaVu_Sans_Condensed','DejaVu_Sans',sans-serif] text-[11px] leading-4 text-black">
      <section className="absolute top-[5px] right-5 bottom-10 left-0.5 flex flex-col rounded-t-md border border-[#43474c] bg-[#d6e2f0]">
        <header className="flex h-[30px] shrink-0 items-center rounded-t-md bg-linear-to-b from-[#bdcad8] to-[#d4e0ed] pt-1 pr-[9px] pl-[9px]">
          <Butterfly faded />
          <h1 className="ml-1 flex-1 font-['Roboto',sans-serif] text-xs text-[#8f9499]">Satınalma Talep İşlemi</h1>
          <div className="flex gap-0.5">
            <button aria-label="Küçült" className={frameButton}>
              <svg width="11" height="5" viewBox="0 0 11 5"><path d="M.5.5h10v4H.5z" fill="#fff" stroke="#5c6370" /></svg>
            </button>
            <button aria-label="Büyüt" className={frameButton}>
              <svg width="11" height="9" viewBox="0 0 11 9"><path d="M.5.5h10v8H.5z" fill="#fff" stroke="#5c6370" /><path d="M3.500 3.500h4v2h-4z" fill="#fff" stroke="#5c6370" /></svg>
            </button>
            <button aria-label="Kapat" className={frameButton}>
              <svg width="11" height="9" viewBox="0 0 11 9"><path d="M2 .8l7 7.400M9 .8L2 8.200" stroke="#5c6370" strokeWidth="4" /><path d="M2.500 1.200l6 6.600m0-6.600l-6 6.600" stroke="#fff" strokeWidth="1.800" /></svg>
            </button>
          </div>
        </header>
        <div className="mx-[7px] mb-[7px] flex min-h-0 flex-1 flex-col bg-[#e2eeff] px-1 pt-[3px] pb-[7px]">
          <div className="mb-[7px] flex pl-[7px]">
            <Toolbar />
            <div className="ml-auto flex gap-2.5 pr-[7px]">
              <div className="text-right">
                <h2 className="h-[21px] font-['Noto_Sans',sans-serif] text-[15px] leading-[21px] font-bold text-[#001070]">Satınalma Talep İşlemi</h2>
                <div className="flex justify-end gap-0.5 text-center leading-[15px]">
                  <span className="w-[70px] bg-[#fffaf0]">8</span>
                  <span className="w-[108px] bg-[#00ff00]">Talep Onay</span>
                </div>
              </div>
              <ToolButton label="Yardım"><HelpIcon /></ToolButton>
            </div>
          </div>
          <RequestForm />
          <Sidebar />
        </div>
      </section>
      <SelectDialog />
    </main>
  );
}

export default App;
